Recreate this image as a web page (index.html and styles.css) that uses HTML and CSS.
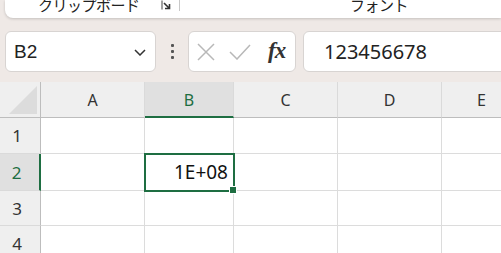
FILE: index.html
```html
<!DOCTYPE html>
<html lang="ja">
<head>
<meta charset="utf-8">
<link rel="stylesheet" href="styles.css">
</head>
<body>
<div class="ribbon">
  <div class="group clip">
    <span class="glabel">クリップボード</span>
    <svg class="launcher" width="11" height="10" viewBox="0 0 11 10"><path d="M1 0.5V9.5" stroke="#444" stroke-width="1"/><path d="M3 3L8.5 8.5M4 8.5H8.5V4" stroke="#333" stroke-width="1.6" fill="none"/></svg>
  </div>
  <div class="sep"></div>
  <div class="group font"><span class="glabel">フォント</span></div>
</div>

<div class="fbar">
  <div class="namebox">
    <span class="ref">B2</span>
    <svg class="chev" width="12" height="7" viewBox="0 0 12 7"><path d="M1 1L6 6L11 1" stroke="#333" stroke-width="1.5" fill="none"/></svg>
  </div>
  <div class="dots"><i></i><i></i><i></i></div>
  <div class="fxbox">
    <svg width="18" height="18" viewBox="0 0 18 18"><path d="M1 1L17 17M17 1L1 17" stroke="#b8b8b8" stroke-width="1.5"/></svg>
    <svg width="22" height="16" viewBox="0 0 22 16"><path d="M1 8L8 15L21 1" stroke="#b8b8b8" stroke-width="1.5" fill="none"/></svg>
    <span class="fx">fx</span>
  </div>
  <div class="finput">123456678</div>
</div>

<div class="sheet">
  <div class="corner"><svg width="29" height="28" viewBox="0 0 29 28"><path d="M28 0V28H0Z" fill="#dcdcdc"/></svg></div>
  <div class="ch">A</div>
  <div class="ch sel">B</div>
  <div class="ch">C</div>
  <div class="ch">D</div>
  <div class="ch">E</div>

  <div class="rh">1</div>
  <div class="c"></div><div class="c"></div><div class="c"></div><div class="c"></div><div class="c"></div>

  <div class="rh sel">2</div>
  <div class="c"></div>
  <div class="c num">1E+08<span class="active"><span class="handle"></span></span></div>
  <div class="c"></div><div class="c"></div><div class="c"></div>

  <div class="rh">3</div>
  <div class="c"></div><div class="c"></div><div class="c"></div><div class="c"></div><div class="c"></div>

  <div class="rh">4</div>
  <div class="c"></div><div class="c"></div><div class="c"></div><div class="c"></div><div class="c"></div>
</div>
</body>
</html>
```

FILE: styles.css
```css
html, body {
  margin: 0;
  padding: 0;
}
body {
  width: 501px;
  height: 253px;
  overflow: hidden;
  background: #efe9e6;
  font-family: "Noto Sans", "Noto Sans CJK JP", sans-serif;
  color: #222;
}
.ribbon {
  margin-left: 5px;
  height: 18px;
  background: #fff;
  border-bottom-left-radius: 8px;
  box-shadow: 0 1px 3px rgba(0,0,0,0.18);
  display: flex;
  align-items: flex-start;
  overflow: hidden;
}
.group {
  display: flex;
  align-items: flex-start;
  height: 18px;
}
.glabel {
  font-family: "Noto Sans CJK JP", sans-serif;
  font-size: 15px;
  line-height: 15px;
  margin-top: -3px;
  color: #222;
  letter-spacing: -0.5px;
}
.clip {
  padding-left: 33px;
  width: 140px;
  box-sizing: content-box;
}
.clip .glabel { width: 123px; }
.launcher {
  margin-top: 0px;
}
.sep {
  width: 1px;
  height: 11px;
  background: #c8c8c8;
  margin-left: 1px;
}
.font { padding-left: 170px; }

.fbar {
  display: flex;
  align-items: stretch;
  padding: 13px 0 0 5px;
  height: 41px;
}
.namebox, .fxbox, .finput {
  background: #fff;
  border: 1px solid #d8d4d2;
  border-radius: 6px;
  box-sizing: border-box;
  height: 41px;
}
.namebox {
  width: 151px;
  display: flex;
  align-items: center;
  justify-content: space-between;
  padding: 0 9px 0 8px;
}
.ref {
  font-family: "Liberation Sans", sans-serif;
  font-size: 19px;
  color: #222;
}
.chev { margin-top: 2px; }
.dots {
  width: 32px;
  display: flex;
  flex-direction: column;
  align-items: center;
  justify-content: center;
  gap: 3px;
}
.dots i {
  display: block;
  width: 3px;
  height: 3px;
  background: #555;
  border-radius: 1px;
}
.fxbox {
  width: 108px;
  display: flex;
  align-items: center;
  padding: 0 0 0 8px;
  gap: 14px;
}
.fx {
  font-family: "Liberation Serif", serif;
  font-style: italic;
  font-weight: bold;
  font-size: 23px;
  color: #333;
  margin-left: 3px;
  letter-spacing: -1px;
  margin-top: -2px;
}
.finput {
  margin-left: 7px;
  flex: 1;
  margin-right: -10px;
  padding-left: 20px;
  display: flex;
  align-items: center;
  font-size: 20px;
  color: #222;
  font-family: "Noto Sans", sans-serif;
}

.sheet {
  margin-top: 10px;
  display: grid;
  grid-template-columns: 41px 104px 89px 104px 104px 80px;
  grid-template-rows: 36px 36px 37px 35px 36px;
  background: #fff;
}
.corner, .ch {
  background: #efefef;
  border-right: 1px solid #dadada;
  border-bottom: 1px solid #bdbdbd;
  box-sizing: border-box;
}
.corner {
  border-right: 1px solid #bdbdbd;
  display: flex;
  align-items: flex-start;
  padding: 4px 0 0 9px;
}
.ch {
  display: flex;
  align-items: center;
  justify-content: center;
  font-size: 16px;
  color: #333;
}
.ch.sel {
  background: #e0e0e0;
  border-bottom: 2px solid #1e6e42;
  color: #1e6e42;
  padding-top: 1px;
}
.rh {
  background: #efefef;
  border-right: 1px solid #bdbdbd;
  border-bottom: 1px solid #dadada;
  box-sizing: border-box;
  display: flex;
  align-items: center;
  justify-content: center;
  padding-right: 6px;
  font-size: 17px;
  color: #333;
}
.rh.sel {
  background: #e0e0e0;
  border-right: 2px solid #1e6e42;
  color: #1e6e42;
}
.c {
  border-right: 1px solid #dcdcdc;
  border-bottom: 1px solid #dcdcdc;
  box-sizing: border-box;
}
.num {
  position: relative;
  display: flex;
  align-items: center;
  justify-content: flex-end;
  padding-right: 5px;
  font-size: 19px;
  color: #111;
}
.active {
  position: absolute;
  left: -1px;
  top: -1px;
  width: 91px;
  height: 39px;
  border: 2px solid #1e6e42;
  box-sizing: border-box;
}
.handle {
  position: absolute;
  right: -4px;
  bottom: -4px;
  width: 6px;
  height: 6px;
  background: #1e6e42;
  border: 1px solid #fff;
}
```
